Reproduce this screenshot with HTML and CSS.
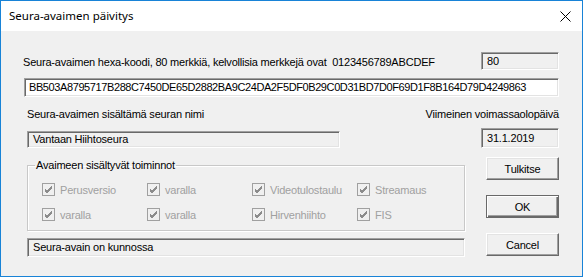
FILE: index.html
```html
<!DOCTYPE html>
<html>
<head>
    <title>Seura-avaimen päivitys</title>
    <link rel="stylesheet" href="styles.css">
</head>
<body>
    <div class="window">
        <div class="titlebar">
            <span class="title">Seura-avaimen päivitys</span>
            <svg class="close" width="11" height="11" viewBox="0 0 11 11">
                <path d="M0.5 0.5 L10.5 10.5 M10.5 0.5 L0.5 10.5" stroke="#000" stroke-width="1" fill="none"/>
            </svg>
        </div>

        <div class="dialog">
            <div class="row keyRow">
                <span class="label">Seura-avaimen hexa-koodi, 80 merkkiä, kelvollisia merkkejä ovat&nbsp; 0123456789ABCDEF</span>
                <div class="field small">80</div>
            </div>

            <div class="field hex">BB503A8795717B288C7450DE65D2882BA9C24DA2F5DF0B29C0D31BD7D0F69D1F8B164D79D4249863</div>

            <div class="row labelRow">
                <span class="label">Seura-avaimen sisältämä seuran nimi</span>
                <span class="label">Viimeinen voimassaolopäivä</span>
            </div>

            <div class="row fieldRow">
                <div class="field name">Vantaan Hiihtoseura</div>
                <div class="field small date">31.1.2019</div>
            </div>

            <div class="bottom">
                <div class="leftCol">
                    <fieldset class="group">
                        <legend>Avaimeen sisältyvät toiminnot</legend>
                        <div class="checks">
                            <div class="check"><span class="box"><svg width="11" height="11" viewBox="0 0 11 11"><path d="M2 5 L4 7 L9 2 M2 6 L4 8 L9 3 M2 7 L4 9 L9 4" stroke="#8c8c8c" stroke-width="1" fill="none"/></svg></span>Perusversio</div>
                            <div class="check"><span class="box"><svg width="11" height="11" viewBox="0 0 11 11"><path d="M2 5 L4 7 L9 2 M2 6 L4 8 L9 3 M2 7 L4 9 L9 4" stroke="#8c8c8c" stroke-width="1" fill="none"/></svg></span>varalla</div>
                            <div class="check"><span class="box"><svg width="11" height="11" viewBox="0 0 11 11"><path d="M2 5 L4 7 L9 2 M2 6 L4 8 L9 3 M2 7 L4 9 L9 4" stroke="#8c8c8c" stroke-width="1" fill="none"/></svg></span>Videotulostaulu</div>
                            <div class="check"><span class="box"><svg width="11" height="11" viewBox="0 0 11 11"><path d="M2 5 L4 7 L9 2 M2 6 L4 8 L9 3 M2 7 L4 9 L9 4" stroke="#8c8c8c" stroke-width="1" fill="none"/></svg></span>Streamaus</div>
                            <div class="check"><span class="box"><svg width="11" height="11" viewBox="0 0 11 11"><path d="M2 5 L4 7 L9 2 M2 6 L4 8 L9 3 M2 7 L4 9 L9 4" stroke="#8c8c8c" stroke-width="1" fill="none"/></svg></span>varalla</div>
                            <div class="check"><span class="box"><svg width="11" height="11" viewBox="0 0 11 11"><path d="M2 5 L4 7 L9 2 M2 6 L4 8 L9 3 M2 7 L4 9 L9 4" stroke="#8c8c8c" stroke-width="1" fill="none"/></svg></span>varalla</div>
                            <div class="check"><span class="box"><svg width="11" height="11" viewBox="0 0 11 11"><path d="M2 5 L4 7 L9 2 M2 6 L4 8 L9 3 M2 7 L4 9 L9 4" stroke="#8c8c8c" stroke-width="1" fill="none"/></svg></span>Hirvenhiihto</div>
                            <div class="check"><span class="box"><svg width="11" height="11" viewBox="0 0 11 11"><path d="M2 5 L4 7 L9 2 M2 6 L4 8 L9 3 M2 7 L4 9 L9 4" stroke="#8c8c8c" stroke-width="1" fill="none"/></svg></span>FIS</div>
                        </div>
                    </fieldset>
                    <div class="field status">Seura-avain on kunnossa</div>
                </div>

                <div class="buttons">
                    <button class="btn">Tulkitse</button>
                    <button class="btn default">OK</button>
                    <button class="btn">Cancel</button>
                </div>
            </div>
        </div>
    </div>
</body>
</html>
```

FILE: styles.css
```css
body {
    margin: 0;
    font-family: "Liberation Sans", Arial, sans-serif;
    font-size: 11px;
    letter-spacing: -0.2px;
    color: #000;
}

.window {
    width: 583px;
    height: 277px;
    box-sizing: border-box;
    border: 1px solid #1883d7;
    background-color: #f0f0f0;
    overflow: hidden;
}

.titlebar {
    height: 30px;
    background-color: #ffffff;
    display: flex;
    align-items: center;
    justify-content: space-between;
    padding: 0 11px 0 8px;
}

.title {
    font-family: "Noto Sans", "Open Sans", sans-serif;
    font-size: 11.5px;
    letter-spacing: 0;
    margin-top: -1px;
}

.close {
    display: block;
}

.dialog {
    padding: 21px 23px 0 23px;
}

.row {
    display: flex;
    justify-content: space-between;
}

.keyRow {
    height: 18px;
    align-items: center;
}

.keyRow .label {
    margin-left: -1px;
    margin-top: 2px;
}

.field {
    box-sizing: border-box;
    height: 18px;
    line-height: 16px;
    padding: 0 5px;
    white-space: nowrap;
    overflow: hidden;
    border: 1px solid;
    border-color: #a0a0a0 #ffffff #ffffff #a0a0a0;
    box-shadow: inset 1px 1px #696969, inset -1px -1px #e3e3e3;
}

.small {
    width: 78px;
}

.hex {
    margin-top: 8px;
    height: 19px;
    line-height: 17px;
    background-color: #ffffff;
    padding-left: 4px;
    letter-spacing: -0.4px;
}

.labelRow {
    margin-top: 9px;
    height: 16px;
    line-height: 16px;
}

.labelRow .label:first-child {
    margin-left: 3px;
}

.fieldRow {
    margin-top: 6px;
    align-items: flex-end;
}

.name {
    width: 313px;
    height: 17px;
    line-height: 15px;
    margin-left: 3px;
}

.date {
    height: 20px;
    line-height: 18px;
}

.bottom {
    display: grid;
    grid-template-columns: 438px 73px;
    justify-content: space-between;
    margin-left: 3px;
}

.group {
    margin: 11px 0 0 0;
    padding: 9px 0 7px 0;
    border: 1px solid #c8c8c8;
    box-shadow: inset 1px 1px #ffffff, 1px 1px #ffffff;
}

.group legend {
    margin-left: 7px;
    padding: 0 1px;
    line-height: 13px;
}

.checks {
    display: grid;
    grid-template-columns: repeat(4, 105px);
    row-gap: 8px;
    padding-left: 14px;
}

.check {
    display: flex;
    align-items: center;
    height: 17px;
    color: #a0a0a0;
}

.box {
    width: 13px;
    height: 13px;
    box-sizing: border-box;
    border: 1px solid #a0a0a0;
    background-color: #f0f0f0;
    margin-right: 5px;
}

.box svg {
    display: block;
}

.status {
    margin-top: 7px;
    height: 19px;
    line-height: 17px;
}

.buttons {
    display: flex;
    flex-direction: column;
    gap: 15px;
    padding-top: 9px;
}

.btn {
    height: 23px;
    padding: 0;
    font-family: "Liberation Sans", Arial, sans-serif;
    font-size: 11px;
    letter-spacing: -0.2px;
    color: #000;
    background-color: #f0f0f0;
    border: 1px solid;
    border-color: #ffffff #696969 #696969 #ffffff;
    box-shadow: inset -1px -1px #a0a0a0, inset 1px 1px #e3e3e3;
}

.btn.default {
    border-color: #696969;
    box-shadow: inset 1px 1px #ffffff, inset -1px -1px #696969, inset -2px -2px #a0a0a0;
}
```
